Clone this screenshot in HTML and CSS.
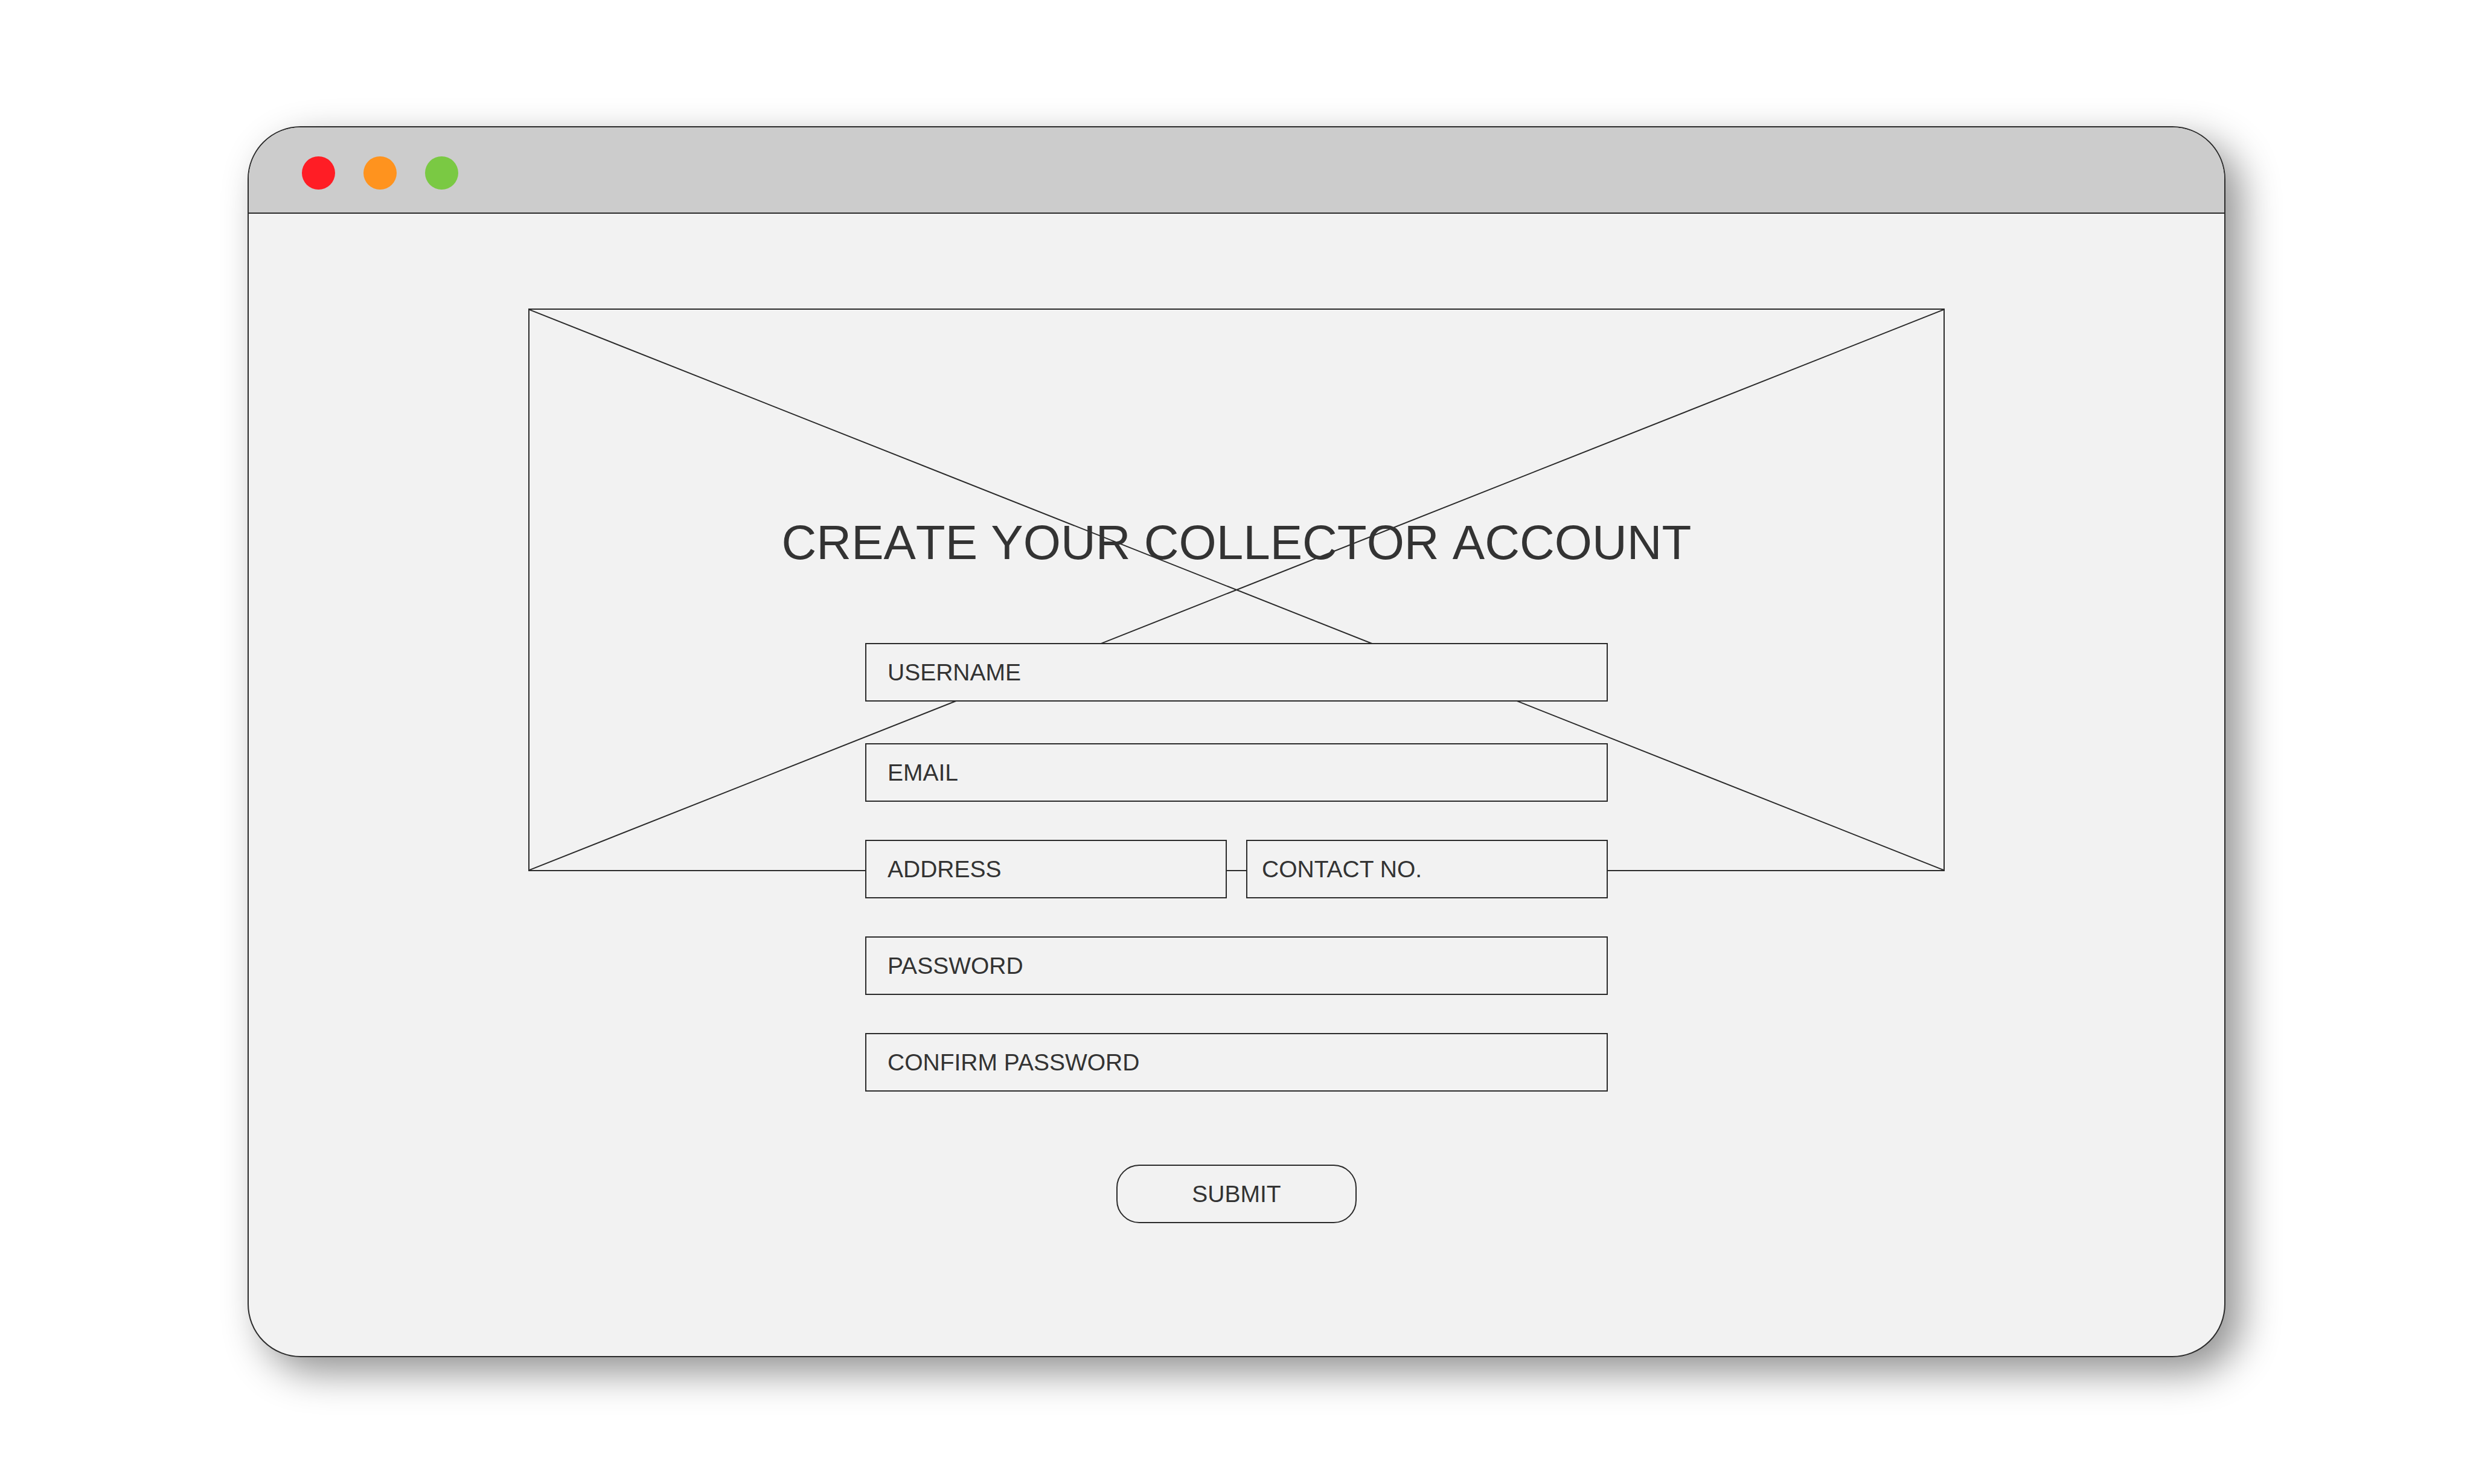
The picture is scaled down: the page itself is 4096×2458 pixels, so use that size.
FILE: index.html
```html
<!DOCTYPE html>
<html lang="en">
<head>
<meta charset="utf-8">
<meta name="viewport" content="width=device-width, initial-scale=1">
<title>Create your collector account</title>
<link rel="stylesheet" href="styles.css">
</head>
<body>
<div class="window">
  <header class="titlebar">
    <span class="dot dot-close"></span>
    <span class="dot dot-minimise"></span>
    <span class="dot dot-zoom"></span>
  </header>
  <main class="content">
    <svg class="image-frame" aria-hidden="true">
      <line x1="0" y1="0" x2="100%" y2="100%"/>
      <line x1="100%" y1="0" x2="0" y2="100%"/>
    </svg>
    <form class="signup">
      <h1 class="heading">CREATE YOUR COLLECTOR ACCOUNT</h1>
      <div class="fields">
        <input class="field field-lead" type="text" aria-label="Username" placeholder="USERNAME">
        <input class="field" type="email" aria-label="Email" placeholder="EMAIL">
        <div class="field-pair">
          <input class="field" type="text" aria-label="Address" placeholder="ADDRESS">
          <input class="field field-narrow" type="tel" aria-label="Contact number" placeholder="CONTACT NO.">
        </div>
        <input class="field" type="password" aria-label="Password" placeholder="PASSWORD">
        <input class="field" type="password" aria-label="Confirm password" placeholder="CONFIRM PASSWORD">
      </div>
      <button class="submit" type="submit">SUBMIT</button>
    </form>
  </main>
</div>
</body>
</html>
```

FILE: styles.css
```css
*,
*::before,
*::after {
  box-sizing: border-box;
}

:root {
  --ink: #333;
  --line: #2b2b2b;
  --panel: #f2f2f2;
}

body {
  margin: 0;
  padding: 209px 10% 210px;
  background: #fff;
  color: var(--ink);
  font-family: "Liberation Sans", Arial, sans-serif;
}

.window {
  overflow: hidden;
  border: 2px solid var(--line);
  border-radius: 88px;
  background: var(--panel);
  box-shadow: 25px 25px 64px rgba(0, 0, 0, 0.43);
}

.titlebar {
  display: flex;
  gap: 47px;
  height: 143px;
  padding: 48px 88px 0;
  border-bottom: 2px solid var(--line);
  background: #ccc;
}

.dot {
  width: 55px;
  height: 55px;
  border-radius: 50%;
}

.dot-close {
  background: #ff1d25;
}

.dot-minimise {
  background: #ff931e;
}

.dot-zoom {
  background: #7ac943;
}

.content {
  display: grid;
  justify-items: center;
  padding: 157px 0 220px;
}

/* The crossed frame and the form share one cell, so the form lies on top. */
.image-frame,
.signup {
  grid-area: 1 / 1;
}

.image-frame {
  width: 100%;
  max-width: 2346px;
  height: 932px;
  border: 2px solid var(--line);
  stroke: var(--line);
  stroke-width: 2px;
}

.signup {
  display: flex;
  flex-direction: column;
  align-items: center;
  width: 100%;
  max-width: 1230px;
  padding-top: 340px;
}

.heading {
  margin: 0 0 118px;
  font-size: 80px;
  font-weight: 400;
  font-kerning: none;
  line-height: 96px;
  white-space: nowrap;
}

.fields {
  display: flex;
  flex-direction: column;
  gap: 63px;
  width: 100%;
}

.field-pair {
  display: grid;
  grid-template-columns: 1fr 1fr;
  gap: 32px;
}

.field,
.submit {
  height: 97px;
  border: 2px solid var(--line);
  background: var(--panel);
  color: var(--ink);
  font-family: inherit;
  font-size: 39px;
}

.field {
  width: 100%;
  padding: 0 35px;
  border-radius: 0;
}

.field::placeholder {
  color: var(--ink);
  opacity: 1;
}

.field-lead {
  margin-bottom: 6px;
}

.field-narrow {
  padding: 0 24px;
}

.submit {
  width: 398px;
  margin-top: 121px;
  padding: 0;
  border-radius: 38px;
}
```
